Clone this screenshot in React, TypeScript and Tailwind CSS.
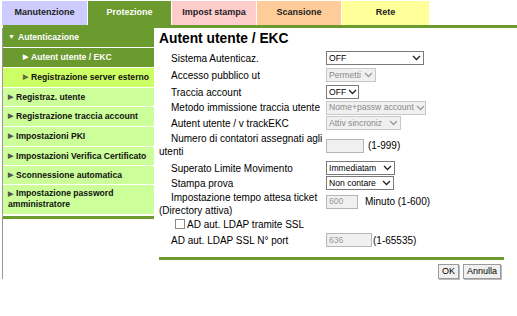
import React from 'react'

const GREEN = 'bg-[#6b9a2e]'

function Chevron({ disabled }: { disabled?: boolean }) {
  return (
    <svg width="9" height="6" viewBox="0 0 9 6" className="ml-auto shrink-0">
      <path d="M1 1 L4.5 4.5 L8 1" fill="none" stroke={disabled ? '#9a9a9a' : '#222'} strokeWidth="1.3" />
    </svg>
  )
}

function Select({ value, width, disabled }: { value: string; width: number; disabled?: boolean }) {
  return (
    <div
      style={{ width }}
      className={`flex h-[14px] items-center gap-[2px] border pl-[2px] pr-[2px] text-[8.6px] leading-none ${
        disabled ? 'border-[#c8c8c8] bg-[#f0f0f0] text-[#8a8a8a]' : 'border-[#7a7a7a] bg-white text-black'
      }`}
    >
      <span className="whitespace-nowrap">{value}</span>
      <Chevron disabled={disabled} />
    </div>
  )
}

function TextBox({ value, width }: { value?: string; width: number }) {
  return (
    <div
      style={{ width }}
      className="flex h-[14px] items-center border border-[#b5b5b5] bg-[#f0f0f0] pl-[2px] text-[8.6px] text-[#9a9a9a]"
    >
      {value}
    </div>
  )
}

const tabs = [
  { label: 'Manutenzione', w: 'w-[85px]', cls: 'bg-[#ccccff] text-[#222]' },
  { label: 'Protezione', w: 'w-[83px]', cls: `${GREEN} text-white` },
  { label: 'Impost stampa', w: 'w-[84px]', cls: 'bg-[#ffcccc] text-[#222]' },
  { label: 'Scansione', w: 'w-[84px]', cls: 'bg-[#ffcc99] text-[#222]' },
  { label: 'Rete', w: 'w-[87px]', cls: 'bg-[#ffff99] text-[#222]' },
]

const menu = [
  { label: 'Registraz. utente', h: 'h-[18px]' },
  { label: 'Registrazione traccia account', h: 'h-[19px]' },
  { label: 'Impostazioni PKI', h: 'h-[19px]' },
  { label: 'Impostazioni Verifica Certificato', h: 'h-[18px]' },
  { label: 'Sconnessione automatica', h: 'h-[18px]' },
]

function Arrow({ color }: { color: string }) {
  return <span className={`mr-[3px] text-[7px] ${color}`}>▶</span>
}

function Row({ label, h, top, children }: { label: React.ReactNode; h: string; top?: boolean; children?: React.ReactNode }) {
  return (
    <div className={`flex ${top ? 'items-start' : 'items-center'} ${h}`}>
      <div className={`w-[167px] shrink-0 indent-3 leading-[13px] ${top ? 'pt-[1px]' : ''}`}>{label}</div>
      <div className={`flex items-center gap-[3px] ${top ? 'self-center' : ''}`}>{children}</div>
    </div>
  )
}

export default function App() {
  return (
    <div className="h-[316px] w-[517px] overflow-hidden bg-white text-[10px] text-black" style={{ fontFamily: '"Liberation Sans", Arial, sans-serif' }}>
      <div className="flex h-[25px] items-start pl-[2px] pt-[1px] text-[9px] font-bold">
        {tabs.map((t) => (
          <div key={t.label} className={`mr-[1px] flex h-[24px] items-center justify-center ${t.w} ${t.cls}`}>
            {t.label}
          </div>
        ))}
      </div>
      <div className={`ml-[3px] h-[3px] ${GREEN}`} />
      <div className="flex">
        <div className="ml-[2px] w-[152px] border-l border-[#9a9a9a] text-[8.6px] font-bold">
          <div className={`flex h-[19px] items-center pl-[5px] text-white ${GREEN}`}>
            <span className="mr-[3px] text-[7px]">▼</span>Autenticazione
          </div>
          <div className={`mt-[1px] flex h-[19px] items-center pl-[20px] text-white ${GREEN}`}>
            <Arrow color="text-white" />Autent utente / EKC
          </div>
          <div className="mt-[1px] flex h-[19px] items-center whitespace-nowrap bg-[#ccff66] pl-[20px] text-[#111]">
            <Arrow color="text-[#6a6a3a]" />Registrazione server esterno
          </div>
          {menu.map((m) => (
            <div key={m.label} className={`mt-[1px] flex items-center whitespace-nowrap bg-[#ccff99] pl-[5px] text-[#111] ${m.h}`}>
              <Arrow color="text-[#555]" />{m.label}
            </div>
          ))}
          <div className="mt-[1px] h-[29px] bg-[#ccff99] pl-[5px] pt-[3px] leading-[10px] text-[#111]">
            <Arrow color="text-[#555]" />Impostazione password amministratore
          </div>
          <div className={`mt-[2px] h-[3px] ${GREEN}`} />
        </div>

        <div className="ml-[5px] w-[345px]">
          <div className="h-[22px] text-[13.8px] font-bold leading-[22px]">Autent utente / EKC</div>
          <Row label="Sistema Autenticaz." h="h-[16px]">
            <Select value="OFF" width={98} />
          </Row>
          <Row label="Accesso pubblico ut" h="h-[18px]">
            <Select value="Permetti" width={50} disabled />
          </Row>
          <Row label="Traccia account" h="h-[16px]">
            <Select value="OFF" width={33} />
          </Row>
          <Row label="Metodo immissione traccia utente" h="h-[15px]">
            <Select value="Nome+passw account" width={100} disabled />
          </Row>
          <Row label="Autent utente / v trackEKC" h="h-[16px]">
            <Select value="Attiv sincroniz" width={75} disabled />
          </Row>
          <Row label="Numero di contatori assegnati agli utenti" h="h-[29px]" top>
            <TextBox width={38} />
            <span className="ml-[1px]">(1-999)</span>
          </Row>
          <Row label="Superato Limite Movimento" h="h-[16px]">
            <Select value="Immediatam" width={69} />
          </Row>
          <Row label="Stampa prova" h="h-[14px]">
            <Select value="Non contare" width={68} />
          </Row>
          <div className="flex h-[26px] items-start">
            <div className="w-[167px] shrink-0 pt-[1px] indent-3 leading-[13px]">Impostazione tempo attesa ticket (Directory attiva)</div>
            <div className="mt-[4px] flex items-center gap-[3px]">
              <TextBox value="600" width={32} />
              <span className="ml-[4px]">Minuto (1-600)</span>
            </div>
          </div>
          <div className="flex h-[16px] items-center pl-[16px]">
            <span className="mr-[2px] inline-block h-[10px] w-[10px] border border-[#8a8a8a] bg-white" />
            AD aut. LDAP tramite SSL
          </div>
          <Row label="AD aut. LDAP SSL N° port" h="h-[16px]">
            <TextBox value="636" width={46} />
            <span className="-ml-[2px]">(1-65535)</span>
          </Row>
          <div className={`mt-[9px] h-[3px] ${GREEN}`} />
          <div className="mt-[4px] flex justify-end gap-[4px] pr-[3px] text-[9px]">
            <button className="h-[15px] border border-[#9a9a9a] bg-[#f0f0f0] px-[3px] leading-none shadow-[1px_1px_0_#bbb]">OK</button>
            <button className="h-[15px] border border-[#9a9a9a] bg-[#f0f0f0] px-[3px] leading-none shadow-[1px_1px_0_#bbb]">Annulla</button>
          </div>
        </div>
      </div>
    </div>
  )
}
